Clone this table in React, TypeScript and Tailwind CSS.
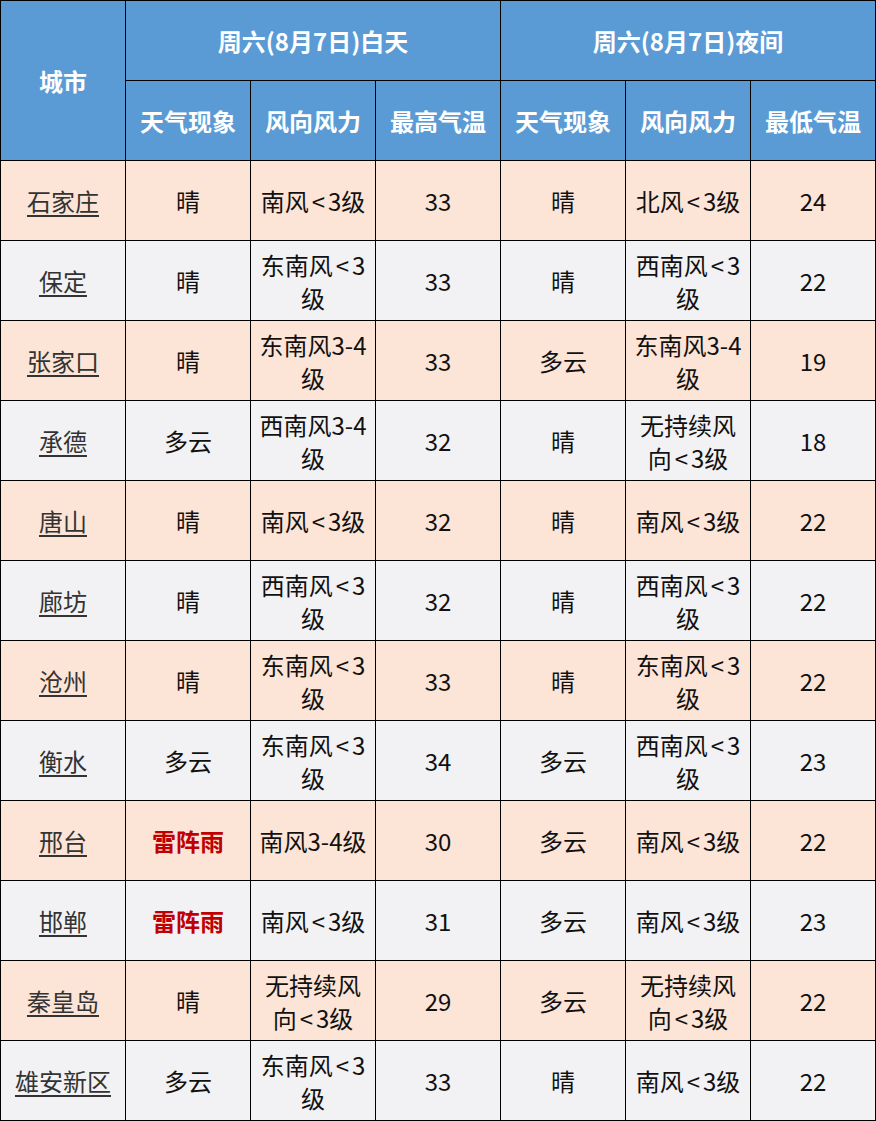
const rows: [string, string, string, string, string, string, string][] = [
  ["石家庄", "晴", "南风<3级", "33", "晴", "北风<3级", "24"],
  ["保定", "晴", "东南风<3级", "33", "晴", "西南风<3级", "22"],
  ["张家口", "晴", "东南风3-4级", "33", "多云", "东南风3-4级", "19"],
  ["承德", "多云", "西南风3-4级", "32", "晴", "无持续风向<3级", "18"],
  ["唐山", "晴", "南风<3级", "32", "晴", "南风<3级", "22"],
  ["廊坊", "晴", "西南风<3级", "32", "晴", "西南风<3级", "22"],
  ["沧州", "晴", "东南风<3级", "33", "晴", "东南风<3级", "22"],
  ["衡水", "多云", "东南风<3级", "34", "多云", "西南风<3级", "23"],
  ["邢台", "雷阵雨", "南风3-4级", "30", "多云", "南风<3级", "22"],
  ["邯郸", "雷阵雨", "南风<3级", "31", "多云", "南风<3级", "23"],
  ["秦皇岛", "晴", "无持续风向<3级", "29", "多云", "无持续风向<3级", "22"],
  ["雄安新区", "多云", "东南风<3级", "33", "晴", "南风<3级", "22"],
];

const head = "bg-[#5b9bd5] text-white font-bold flex items-center justify-center text-center";

// the "<" in the source font sits with a little air either side
function Wind({ text }: { text: string }) {
  const i = text.indexOf("<");
  if (i < 0) return <span>{text}</span>;
  return (
    <span>
      {text.slice(0, i)}
      <span className="mx-[3px]">&lt;</span>
      {text.slice(i + 1)}
    </span>
  );
}

export default function App() {
  return (
    <div
      className="w-[876px] bg-black p-px grid grid-cols-[repeat(7,124px)] grid-rows-[repeat(14,79px)] gap-px text-[24px] leading-[33px] text-[#111]"
      style={{ fontFamily: '"Noto Sans CJK SC", "Noto Sans", sans-serif' }}
    >
      <div className={`${head} row-span-2`}>城市</div>
      <div className={`${head} col-span-3`}>周六(8月7日)白天</div>
      <div className={`${head} col-span-3`}>周六(8月7日)夜间</div>
      {["天气现象", "风向风力", "最高气温", "天气现象", "风向风力", "最低气温"].map((t, i) => (
        <div key={i} className={head}>{t}</div>
      ))}
      {rows.map((r, ri) => {
        const bg = ri % 2 === 0 ? "bg-[#fce4d6]" : "bg-[#f2f2f4]";
        return r.map((c, ci) => (
          <div key={`${ri}-${ci}`} className={`${bg} flex items-center justify-center text-center px-1`}>
            {ci === 0 ? (
              <span className="underline underline-offset-4 text-[#333]">{c}</span>
            ) : c === "雷阵雨" ? (
              <span className="font-bold text-[#c00000]">{c}</span>
            ) : (
              <Wind text={c} />
            )}
          </div>
        ));
      })}
    </div>
  );
}
